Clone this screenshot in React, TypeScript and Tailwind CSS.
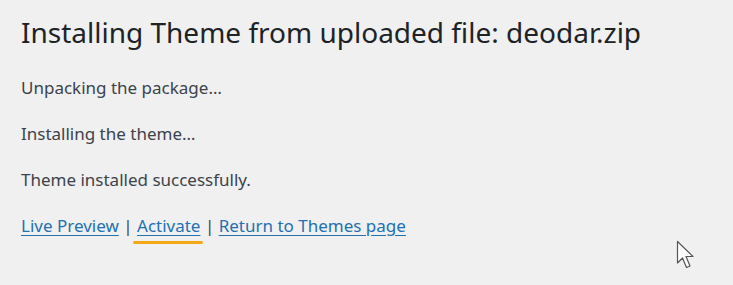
export default function App() {
  return (
    <div className="h-[285px] w-[733px] overflow-hidden bg-[#f0f0f1] text-[#3c434a] font-['Noto_Sans',sans-serif] relative">
      <div className="pl-[21px] pt-[12px]">
        <h1 className="text-[28px] leading-[40px] text-[#1d2327]">
          Installing Theme from uploaded file: deodar.zip
        </h1>
        <div className="mt-[24px] flex flex-col gap-[22px] text-[17px] leading-[24px]">
          <p>Unpacking the package…</p>
          <p>Installing the theme…</p>
          <p>Theme installed successfully.</p>
          <p>
            <a href="#" className="text-[#2271b1] underline underline-offset-[3px]">Live Preview</a>
            {' | '}
            <span className="relative inline-block">
              <a href="#" className="text-[#2271b1] underline underline-offset-[3px]">Activate</a>
              <span className="absolute left-[-4px] right-[-3px] top-[27px] h-[3px] rounded-full bg-[#f5a815]" />
            </span>
            {' | '}
            <a href="#" className="text-[#2271b1] underline underline-offset-[3px]">Return to Themes page</a>
          </p>
        </div>
      </div>
      <svg className="absolute left-[676px] top-[240px]" width="22" height="31" viewBox="0 0 22 31">
        <path d="M1.5 1.5 L1.5 23 L6.5 18 L10.5 27.5 L14 26 L10 16.5 L17 16.5 Z" fill="#fff" stroke="#555" strokeWidth="1.2" strokeLinejoin="round" />
      </svg>
    </div>
  )
}
